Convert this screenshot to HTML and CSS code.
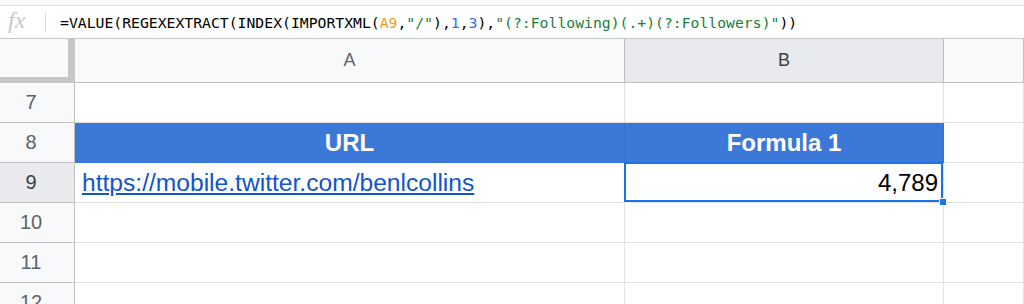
FILE: index.html
```html
<!DOCTYPE html>
<html lang="en">
  <head>
    <meta charset="UTF-8" />
    <meta name="viewport" content="width=device-width, initial-scale=1.0" />
    <title>Sheet - IMPORTXML followers</title>
    <link rel="stylesheet" href="styles.css">
  </head>
  <body>
    <div class="topband"></div>

    <div class="formula-bar">
      <span class="fx">fx</span>
      <span class="divider"></span>
      <div class="formula">=VALUE(REGEXEXTRACT(INDEX(IMPORTXML(<span class="ref">A9</span>,<span class="str">"/"</span>),<span class="num">1</span>,<span class="num">3</span>),<span class="str">"(?:Following)(.+)(?:Followers)"</span>))</div>
    </div>

    <div class="sheet">
      <div class="corner"></div>
      <div class="col-head">A</div>
      <div class="col-head active">B</div>
      <div class="col-head"></div>

      <div class="row-head">7</div>
      <div class="cell"></div>
      <div class="cell"></div>
      <div class="cell"></div>

      <div class="row-head">8</div>
      <div class="cell title">URL</div>
      <div class="cell title">Formula 1</div>
      <div class="cell"></div>

      <div class="row-head active">9</div>
      <div class="cell"><a class="link" href="#">https://mobile.twitter.com/benlcollins</a></div>
      <div class="cell number selected">4,789</div>
      <div class="cell"></div>

      <div class="row-head">10</div>
      <div class="cell"></div>
      <div class="cell"></div>
      <div class="cell"></div>

      <div class="row-head">11</div>
      <div class="cell"></div>
      <div class="cell"></div>
      <div class="cell"></div>

      <div class="row-head">12</div>
      <div class="cell"></div>
      <div class="cell"></div>
      <div class="cell"></div>
    </div>
  </body>
</html>
```

FILE: styles.css
```css
body {
  margin: 0;
  background: #fff;
  overflow: hidden;
  font-family: "Liberation Sans", Arial, sans-serif;
}

.topband {
  height: 5px;
  background: #f8f9fa;
  border-bottom: 1px solid #e0e0e0;
}

.formula-bar {
  display: flex;
  align-items: center;
  height: 32px;
  border-bottom: 1px solid #c4c7c5;
  background: #fff;
}

.fx {
  width: 30px;
  padding-left: 8px;
  font-family: "Liberation Serif", serif;
  font-style: italic;
  font-size: 24px;
  color: #c8c8c8;
  line-height: 1;
  margin-top: -4px;
}

.divider {
  width: 1px;
  height: 21px;
  background: #dadce0;
  margin-left: 7px;
}

.formula {
  margin-left: 14px;
  font-family: "DejaVu Sans Mono", "Liberation Mono", monospace;
  font-size: 14.75px;
  color: #000;
  white-space: nowrap;
}

.ref { color: #f09a1c; }
.str { color: #188038; }
.num { color: #3b6fd6; }

.sheet {
  display: grid;
  grid-template-columns: 75px 550px 319px 1fr;
  grid-template-rows: 44px repeat(6, 40px);
}

.sheet > div {
  box-sizing: border-box;
  border-right: 1px solid #e2e2e2;
  border-bottom: 1px solid #e2e2e2;
}

.corner {
  background: #f8f9fa;
  border-right: 7px solid #c6c6c6 !important;
  border-bottom: 6px solid #c6c6c6 !important;
}

.col-head {
  display: flex;
  align-items: center;
  justify-content: center;
  background: #f8f9fa;
  color: #5f6368;
  font-size: 18px;
  border-bottom-color: #c0c0c0 !important;
  border-right-color: #c0c0c0 !important;
}

.col-head.active {
  background: #e8eaed;
  color: #3c4043;
}

.row-head {
  display: flex;
  align-items: center;
  justify-content: center;
  padding-right: 12px;
  background: #f8f9fa;
  color: #5f6368;
  font-size: 20px;
  border-right-color: #c0c0c0 !important;
  border-bottom-color: #c0c0c0 !important;
}

.row-head.active {
  background: #e8eaed;
  color: #3c4043;
}

.cell {
  display: flex;
  align-items: center;
  font-size: 24px;
  color: #000;
}

.cell.title {
  justify-content: center;
  background: #3c78d8;
  color: #fff;
  font-weight: bold;
  border-bottom-color: #3c78d8 !important;
  border-right-color: #3a71cc !important;
}

.link {
  padding-left: 7px;
  font-size: 24.6px;
  color: #1155cc;
  text-decoration: underline;
}

.cell.number {
  justify-content: flex-end;
  padding-right: 5px;
}

.selected {
  position: relative;
}

.selected::after {
  content: "";
  position: absolute;
  top: -1px;
  left: -1px;
  right: 0;
  bottom: 0;
  border: 2px solid #1a73e8;
}

.selected::before {
  content: "";
  position: absolute;
  right: -4px;
  bottom: -4px;
  width: 6px;
  height: 6px;
  background: #1a73e8;
  border: 1px solid #fff;
  z-index: 1;
}
```
